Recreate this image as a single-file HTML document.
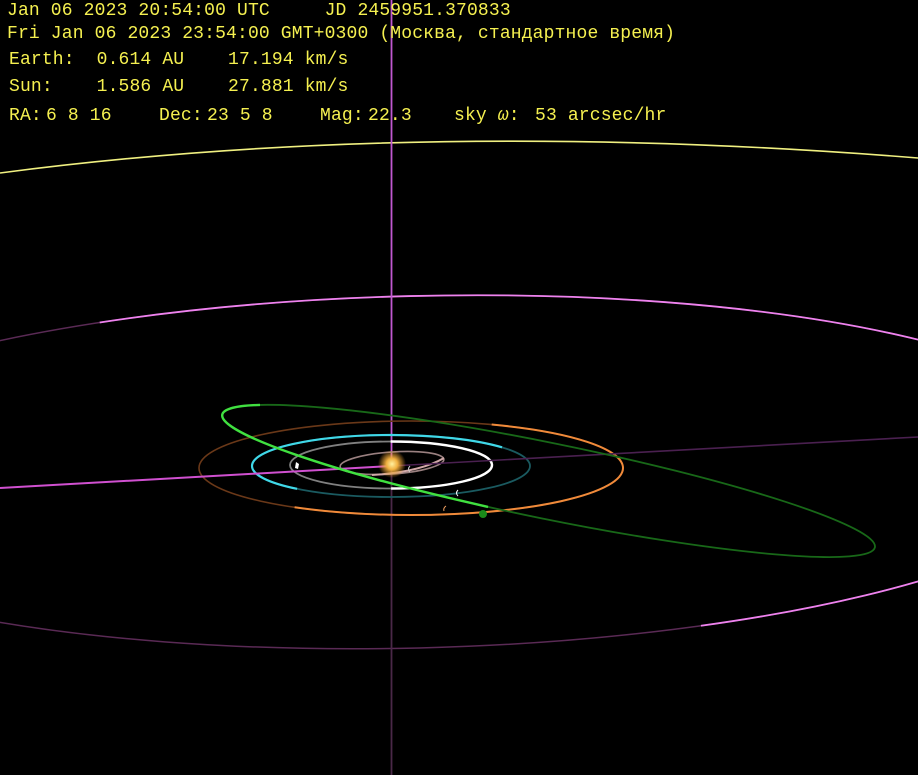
<!DOCTYPE html>
<html><head><meta charset="utf-8"><style>
html,body{margin:0;padding:0;background:#000;width:918px;height:775px;overflow:hidden}
svg{position:absolute;left:0;top:0}
.t{position:absolute;left:0;top:0;font-family:"Liberation Mono","DejaVu Sans Mono",monospace;font-size:18px;color:#f5f050;white-space:pre;line-height:1;letter-spacing:0.15px}
</style></head><body>
<svg width="918" height="775" viewBox="0 0 918 775">
<defs>
<radialGradient id="sun"><stop offset="0" stop-color="#fff0a0"/><stop offset="0.4" stop-color="#f0b040"/><stop offset="1" stop-color="#f0a030" stop-opacity="0"/></radialGradient>
</defs>
<path d="M0 173 Q420 118 918 158" fill="none" stroke="#f0f080" stroke-width="1.6"/>
<g transform="rotate(-1.4 415 472)">
<ellipse cx="415" cy="472" rx="692" ry="176" fill="none" stroke="#5a2a55" stroke-width="1.5"/>
<ellipse cx="415" cy="472" rx="692" ry="176" fill="none" stroke="#ee82ee" stroke-width="1.8" pathLength="100" stroke-dasharray="15.5 49 35.5 0"/>
</g>
<line x1="391.5" y1="0" x2="391.5" y2="465" stroke="#c058d0" stroke-width="1.8"/>
<line x1="391.5" y1="465" x2="391.5" y2="775" stroke="#4a2848" stroke-width="1.8"/>
<ellipse cx="411" cy="468" rx="212" ry="47" fill="none" stroke="#6a3818" stroke-width="1.6"/>
<ellipse cx="411" cy="468" rx="212" ry="47" fill="none" stroke="#f08a3a" stroke-width="2" pathLength="100" stroke-dasharray="38 46 16 0"/>
<ellipse cx="391" cy="466" rx="139" ry="31" fill="none" stroke="#1a5a60" stroke-width="1.8"/>
<ellipse cx="391" cy="466" rx="139" ry="31" fill="none" stroke="#40d8e8" stroke-width="2.2" pathLength="100" stroke-dasharray="0 41 53 6"/>
<ellipse cx="391" cy="465" rx="101" ry="23.5" fill="none" stroke="#808080" stroke-width="1.8"/>
<ellipse cx="391" cy="465" rx="101" ry="23.5" fill="none" stroke="#ffffff" stroke-width="2.4" pathLength="100" stroke-dasharray="25 50 25 0"/>
<ellipse cx="392" cy="463" rx="52" ry="11" fill="none" stroke="#9a8080" stroke-width="1.6" transform="rotate(-4 392 463)"/>
<path d="M372 475 Q420 472 444 458" fill="none" stroke="#d0a8a8" stroke-width="2"/>
<line x1="0" y1="488" x2="391" y2="466" stroke="#d050d0" stroke-width="2"/>
<line x1="391" y1="466" x2="918" y2="437" stroke="#4a2050" stroke-width="1.6"/>
<g transform="rotate(11.5 549 479)">
<ellipse cx="549" cy="481" rx="333" ry="38" fill="none" stroke="#186818" stroke-width="1.8"/>
<ellipse cx="549" cy="481" rx="333" ry="38" fill="none" stroke="#40e040" stroke-width="2.4" pathLength="100" stroke-dasharray="0 29 24 47"/>
</g>
<circle cx="483" cy="514" r="4" fill="#1a8a1a"/>
<path d="M296 462 l3 2 -1 5 -3 -1z" fill="#fff"/>
<path d="M458 490 q-3 3 0 6" fill="none" stroke="#fff" stroke-width="1"/>
<path d="M410 466 q-3 3 0 6" fill="none" stroke="#ccc" stroke-width="1"/>
<path d="M446 506 q-3 2 -2 5" fill="none" stroke="#f0a060" stroke-width="1"/>
<circle cx="392" cy="464" r="14" fill="url(#sun)"/>
</svg>
<div class="t" style="left:7px;top:2px">Jan 06 2023 20:54:00 UTC     JD 2459951.370833</div>
<div class="t" style="left:7px;top:25px">Fri Jan 06 2023 23:54:00 GMT+0300 (Москва, стандартное время)</div>
<div class="t" style="left:9px;top:51px">Earth:  0.614 AU    17.194 km/s</div>
<div class="t" style="left:9px;top:78px">Sun:    1.586 AU    27.881 km/s</div>
<div class="t" style="left:9px;top:107px">RA:</div>
<div class="t" style="left:46px;top:107px">6 8 16</div>
<div class="t" style="left:159px;top:107px">Dec:</div>
<div class="t" style="left:207px;top:107px">23 5 8</div>
<div class="t" style="left:320px;top:107px">Mag:</div>
<div class="t" style="left:368px;top:107px">22.3</div>
<div class="t" style="left:454px;top:107px">sky <i>ω</i>:</div>
<div class="t" style="left:535px;top:107px">53 arcsec/hr</div>
</body></html>
